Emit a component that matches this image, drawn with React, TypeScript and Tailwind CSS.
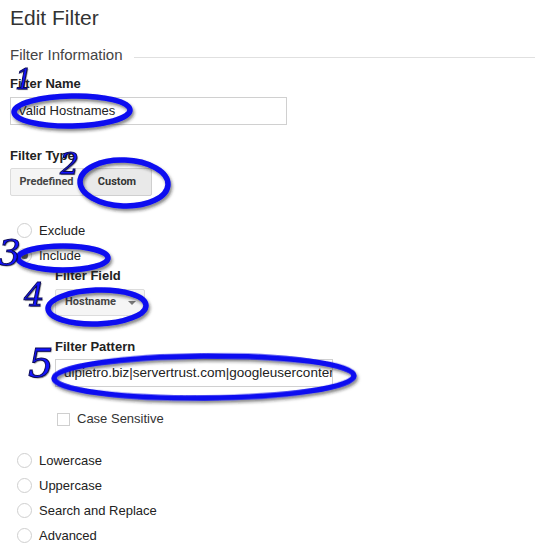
import React from "react";

const Radio = ({ label, checked = false }: { label: string; checked?: boolean }) => (
  <div className="flex h-[25px] items-center">
    <span className="ml-[7px] flex h-[15px] w-[15px] items-center justify-center rounded-full border border-[#cfcfcf] bg-white">
      {checked ? <span className="h-[7px] w-[7px] rounded-full bg-[#555]" /> : null}
    </span>
    <span className="ml-[7px] text-[13px] leading-[16px] text-[#222]">{label}</span>
  </div>
);

const Label = ({ children, className = "" }: { children: React.ReactNode; className?: string }) => (
  <div className={`text-[13px] font-bold leading-[16px] text-[#222] ${className}`}>{children}</div>
);

const Annotations = () => (
  <svg className="pointer-events-none absolute inset-0" width="545" height="559" viewBox="0 0 545 559">
    <defs>
      <filter id="shade" x="-20%" y="-40%" width="140%" height="180%">
        <feDropShadow dx="1.5" dy="2.5" stdDeviation="1.4" floodColor="#222" floodOpacity="0.55" />
      </filter>
    </defs>
    <g fill="none" stroke="#0a0af0" strokeWidth="5.5" filter="url(#shade)">
      <ellipse cx="72" cy="111" rx="58" ry="15" transform="rotate(-1 72 111)" />
      <ellipse cx="124" cy="183" rx="44" ry="23" transform="rotate(2 124 183)" />
      <ellipse cx="63" cy="258" rx="45" ry="12" />
      <ellipse cx="97" cy="307" rx="49" ry="17" transform="rotate(-2 97 307)" />
      <ellipse cx="204" cy="377" rx="150" ry="21" transform="rotate(-0.5 204 377)" />
    </g>
  </svg>
);

const Num = ({ n, className }: { n: string; className: string }) => (
  <span
    className={`pointer-events-none absolute font-['DejaVu_Serif',serif] italic leading-none text-[#1414ff] [-webkit-text-stroke:1px_#0a0a55] [text-shadow:1px_1px_1px_rgba(0,0,0,0.5)] ${className}`}
  >
    {n}
  </span>
);

export default function App() {
  return (
    <div className="relative h-[559px] w-[545px] overflow-hidden bg-white px-[10px] font-['Liberation_Sans',Arial,sans-serif]">
      <h1 className="pt-[6px] text-[21px] font-normal leading-[24px] text-[#333]">Edit Filter</h1>

      <div className="mt-[16px] flex h-[18px] items-center">
        <span className="text-[15px] leading-[18px] text-[#444]">Filter Information</span>
        <div className="ml-[11px] mt-[4px] h-px flex-1 bg-[#e0e0e0]" />
      </div>

      <Label className="mt-[12px]">Filter Name</Label>
      <div className="mt-[5px] flex h-[28px] w-[277px] items-center border border-[#d0d0d0] px-[7px] text-[13px] text-[#222]">
        Valid Hostnames
      </div>

      <Label className="mt-[23px]">Filter Type</Label>
      <div className="mt-[4px] flex h-[28px] font-['Roboto',sans-serif] text-[11px] font-bold text-[#444]">
        <div className="flex w-[73px] items-center justify-center rounded-l-[2px] border border-[#dcdcdc] bg-[#f5f5f5]">
          Predefined
        </div>
        <div className="-ml-px flex w-[70px] items-center justify-center rounded-r-[2px] border border-[#cfcfcf] bg-[#e9e9e9] text-[#333]">
          Custom
        </div>
      </div>

      <div className="mt-[22px]">
        <Radio label="Exclude" />
        <Radio label="Include" checked />
      </div>

      <div className="ml-[45px]">
        <Label>Filter Field</Label>
        <div className="mt-[5px] flex h-[27px] w-[90px] items-center rounded-[2px] border border-[#dcdcdc] bg-[#f5f5f5] pl-[9px] font-['Roboto',sans-serif] text-[11px] font-bold text-[#444]">
          Hostname
          <span className="ml-auto mr-[8px] h-0 w-0 border-x-[4px] border-t-[4px] border-x-transparent border-t-[#777]" />
        </div>

        <Label className="mt-[23px]">Filter Pattern</Label>
        <div className="mt-[4px] flex h-[28px] w-[278px] items-center overflow-hidden whitespace-nowrap border border-[#d0d0d0] px-[8px] text-[13.5px] text-[#222]">
          dipietro.biz|servertrust.com|googleusercontent.com
        </div>

        <div className="ml-[2px] mt-[22px] flex h-[20px] items-center">
          <span className="h-[13px] w-[13px] border border-[#cfcfcf] bg-white" />
          <span className="ml-[7px] text-[13px] text-[#333]">Case Sensitive</span>
        </div>
      </div>

      <div className="mt-[19px]">
        <Radio label="Lowercase" />
        <Radio label="Uppercase" />
        <Radio label="Search and Replace" />
        <Radio label="Advanced" />
      </div>

      <Annotations />
      <Num n="1" className="left-[15px] top-[66px] text-[28px]" />
      <Num n="2" className="left-[60px] top-[149px] text-[30px]" />
      <Num n="3" className="left-[-2px] top-[235px] text-[36px]" />
      <Num n="4" className="left-[24px] top-[279px] text-[32px]" />
      <Num n="5" className="left-[28px] top-[343px] text-[40px]" />
    </div>
  );
}
